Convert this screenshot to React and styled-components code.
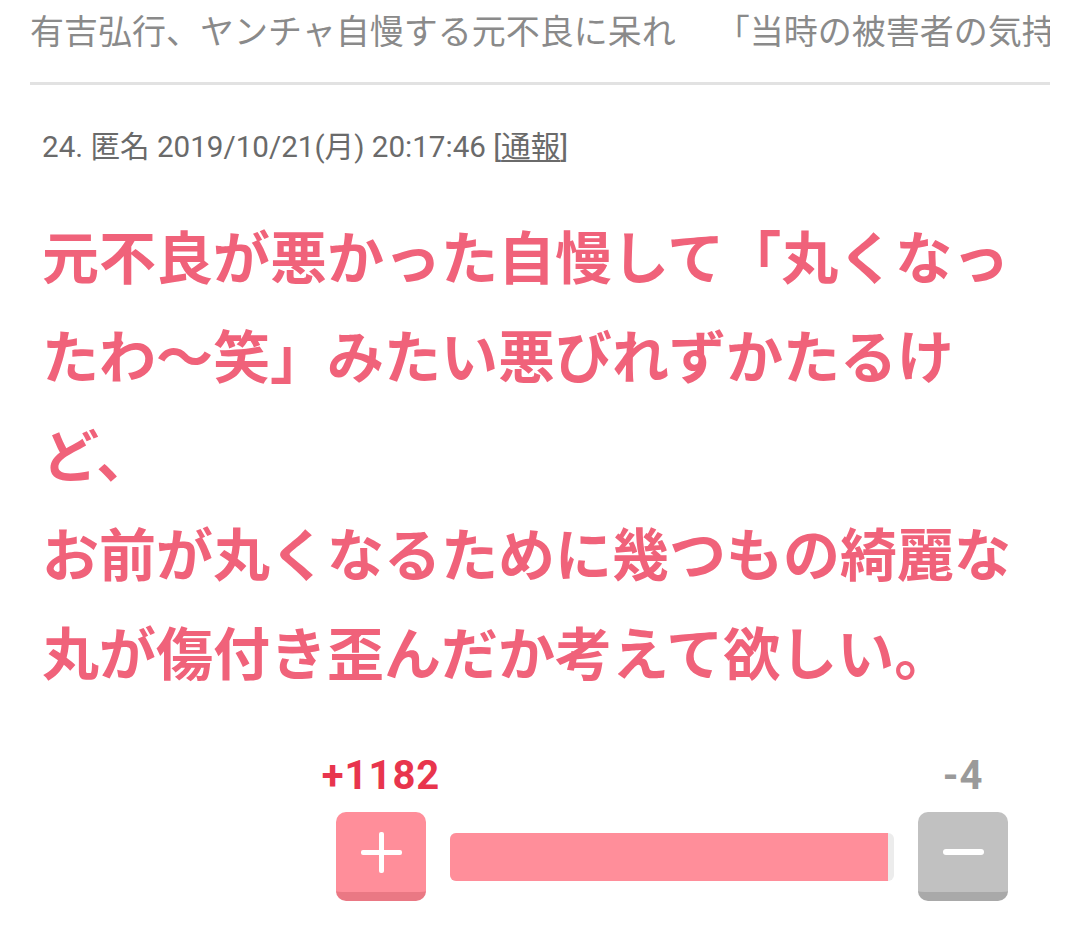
import React from 'react';
import styled, { createGlobalStyle } from 'styled-components';

const TITLES = [
  '有吉弘行、ヤンチャ自慢する元不良に呆れ',
  '「当時の被害者の気持ちを考えて」',
];
const META = '24. 匿名 2019/10/21(月) 20:17:46 ';
const REPORT = '通報';
const BODY_LINES = [
  '元不良が悪かった自慢して「丸くなったわ〜笑」みたい悪びれずかたるけど、',
  'お前が丸くなるために幾つもの綺麗な丸が傷付き歪んだか考えて欲しい。',
];
const PLUS = 1182;
const MINUS = 4;

const GlobalStyle = createGlobalStyle`
  body {
    margin: 0;
    background: #fff;
    font-family: Roboto, "Noto Sans CJK JP", sans-serif;
  }
`;

const Page = styled.div`
  width: 1077px;
  padding-bottom: 40px;
`;

const Header = styled.header`
  margin: 0 27px 0 30px;
  padding: 13px 0 35px;
  border-bottom: 3px solid #e2e2e2;
`;

// headline ticker, cut off at the right edge
const Ticker = styled.div`
  display: flex;
  gap: 40px;
  overflow: hidden;
  white-space: nowrap;
`;

const Title = styled.h1`
  margin: 0;
  flex: none;
  font-family: "Noto Sans CJK JP", sans-serif;
  font-size: 34px;
  font-weight: 400;
  line-height: 34px;
  color: #8a8a8a;
`;

const Comment = styled.article`
  padding: 0 42px;
`;

const Meta = styled.div`
  margin-top: 42px;
  font-size: 29.6px;
  line-height: 40px;
  color: #6a6a6a;
`;

const Report = styled.span`
  text-decoration: underline;
  text-underline-offset: 3px;
`;

const Body = styled.p`
  margin: 38px 0 0;
  font-family: "Noto Sans CJK JP", sans-serif;
  font-size: 57px;
  font-weight: 700;
  line-height: 99px;
  color: #f0627a;
  line-break: strict;
`;

const Vote = styled.div`
  display: grid;
  grid-template-columns: 90px 1fr 90px;
  column-gap: 24px;
  row-gap: 18px;
  align-items: center;
  width: 672px;
  margin: 58px 27px 0 auto;
`;

const Count = styled.div`
  justify-self: center;
  font-family: Roboto, sans-serif;
  font-weight: 700;
  font-size: 40px;
  line-height: 36px;
  letter-spacing: 1px;
  white-space: nowrap;
  color: ${(p) => (p.up ? '#e8354d' : '#9a9a9a')};
  grid-column: ${(p) => (p.up ? 1 : 3)};
`;

const Button = styled.button`
  width: 90px;
  height: 89px;
  padding: 0;
  border: none;
  border-radius: 10px;
  display: flex;
  align-items: center;
  justify-content: center;
  background: ${(p) => (p.up ? '#ff8e9a' : '#c1c1c1')};
  border-bottom: 9px solid ${(p) => (p.up ? '#ea7884' : '#a9a9a9')};
  cursor: pointer;
`;

const Track = styled.div`
  height: 48px;
  border-radius: 6px;
  background: #ececec;
  overflow: hidden;
`;

const Fill = styled.div`
  height: 100%;
  background: #ff8e9a;
`;

const PlusIcon = () => (
  <svg width="41" height="41" viewBox="0 0 41 41">
    <rect x="18" y="0" width="5" height="41" rx="2" fill="#fff" />
    <rect x="0" y="18" width="41" height="5" rx="2" fill="#fff" />
  </svg>
);

const MinusIcon = () => (
  <svg width="41" height="6" viewBox="0 0 41 6">
    <rect x="0" y="0" width="41" height="6" rx="3" fill="#fff" />
  </svg>
);

const App = () => {
  const ratio = PLUS / (PLUS + MINUS);

  return (
    <Page>
      <GlobalStyle />
      <Header>
        <Ticker>
          {TITLES.map((t) => (
            <Title key={t}>{t}</Title>
          ))}
        </Ticker>
      </Header>
      <Comment>
        <Meta>
          {META}[<Report>{REPORT}</Report>]
        </Meta>
        <Body>
          {BODY_LINES[0]}
          <br />
          {BODY_LINES[1]}
        </Body>
        <Vote>
          <Count up>+{PLUS}</Count>
          <Count>-{MINUS}</Count>
          <Button up aria-label="plus">
            <PlusIcon />
          </Button>
          <Track>
            <Fill style={{ width: `calc(${ratio * 100}% - 5px)` }} />
          </Track>
          <Button aria-label="minus">
            <MinusIcon />
          </Button>
        </Vote>
      </Comment>
    </Page>
  );
};

export default App;
